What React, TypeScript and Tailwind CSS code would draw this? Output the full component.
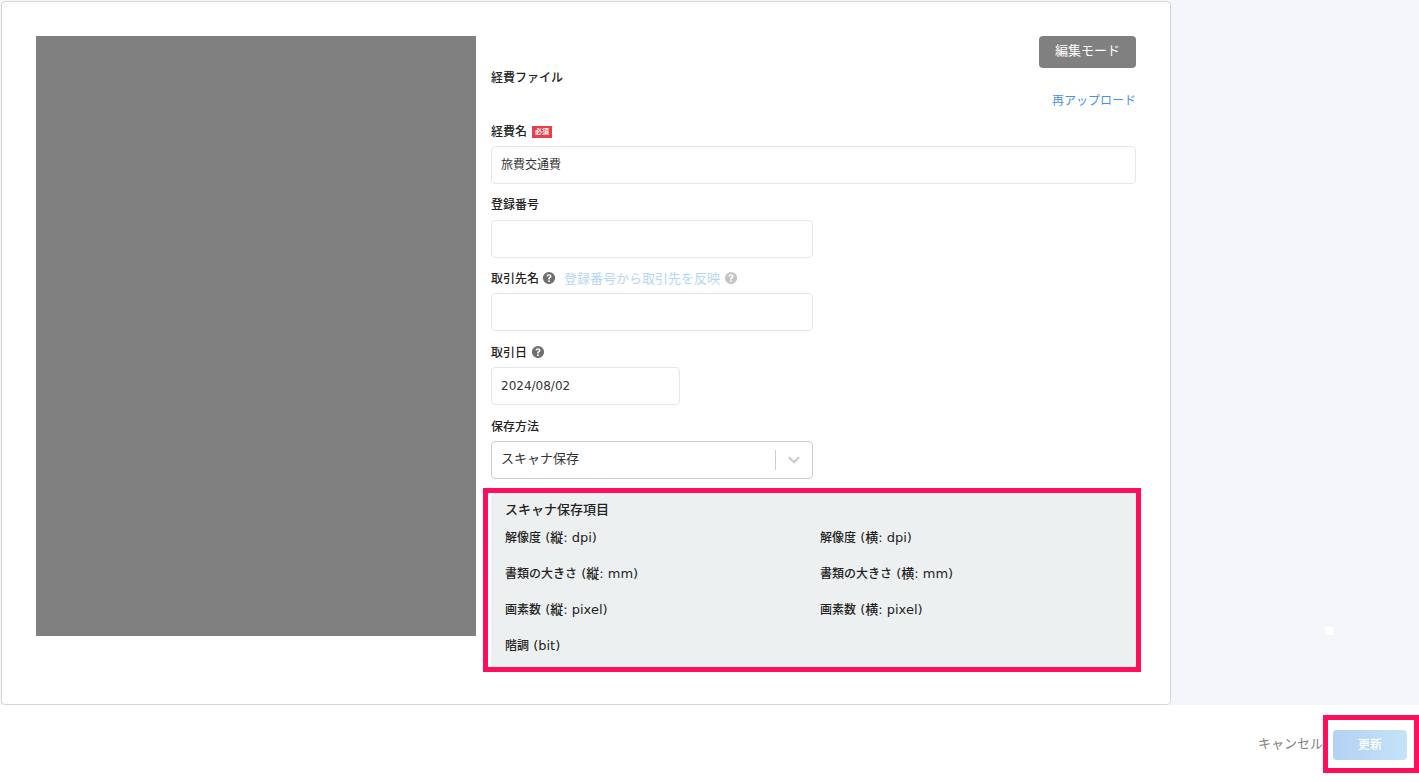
import { ChevronDown } from 'lucide-react';

function Help({ className }: { className: string }) {
  return (
    <svg viewBox="0 0 16 16" className={className} fill="currentColor">
      <path
        fillRule="evenodd"
        d="M8 1a7 7 0 1 1 0 14A7 7 0 0 1 8 1Zm-.9 9.6v1.9h1.8v-1.9H7.1ZM8 3.6c-1.6 0-2.7.9-2.9 2.4l1.7.3c.1-.8.5-1.2 1.2-1.2.6 0 1 .4 1 .9 0 .4-.2.7-.8 1.2-.8.6-1.1 1.2-1.1 2v.4h1.7v-.3c0-.4.2-.7.8-1.1.9-.7 1.2-1.3 1.2-2.2 0-1.4-1.1-2.4-2.8-2.4Z"
      />
    </svg>
  );
}

function Input({ className, value }: { className: string; value?: string }) {
  return (
    <div className={`h-[38px] rounded border border-[#e2e6ef] bg-white px-[9px] text-xs leading-[36px] text-[#333] ${className}`}>
      {value}
    </div>
  );
}

const scanItems = [
  ['解像度', ' (縦: dpi)'],
  ['解像度', ' (横: dpi)'],
  ['書類の大きさ', ' (縦: mm)'],
  ['書類の大きさ', ' (横: mm)'],
  ['画素数', ' (縦: pixel)'],
  ['画素数', ' (横: pixel)'],
  ['階調', ' (bit)'],
];

export default function App() {
  return (
    <div className="h-[782px] overflow-hidden bg-white font-['DejaVu_Sans','Noto_Sans_CJK_JP',sans-serif]">
      <div className="relative h-[705px] bg-[#f5f6fa] pt-px pl-px">
        <div className="flex h-[704px] w-[1170px] rounded border border-[#d5d7dc] bg-white pt-[34px] pl-[34px]">
          <div className="h-[600px] w-[440px] bg-[#808080]" />

          <div className="ml-[15px] w-[645px]">
            <div className="flex justify-end">
              <button className="h-8 w-[97px] rounded bg-[#808080] pb-[3px] text-[13px] text-white">編集モード</button>
            </div>
            <div className="h-[18px] text-xs leading-5 font-medium text-[#222]">経費ファイル</div>
            <div className="mt-[3px] h-6 text-right text-xs leading-6 text-[#4a90e2]">再アップロード</div>

            <div className="mt-[9px] flex h-[18px] items-center gap-[5px] pt-0.5 text-xs font-medium text-[#222]">
              経費名
              <span className="flex h-3 w-5 items-center justify-center bg-[#e8404a] text-[7px] leading-none font-bold text-white">必須</span>
            </div>
            <Input className="mt-1.5 w-full" value="旅費交通費" />

            <div className="mt-[11px] h-[18px] text-xs leading-5 font-medium text-[#222]">登録番号</div>
            <Input className="mt-[7px] w-[322px]" />

            <div className="mt-[11px] flex h-[18px] items-center pt-0.5 text-xs font-medium text-[#222]">
              取引先名
              <Help className="-mt-[3px] ml-[3px] h-[14px] w-[14px] text-[#6f6f6f]" />
              <span className="ml-2 text-[13px] font-normal text-[#b5d6f2]">登録番号から取引先を反映</span>
              <Help className="-mt-[3px] ml-1 h-[14px] w-[14px] text-[#c4c4c4]" />
            </div>
            <Input className="mt-1.5 w-[322px]" />

            <div className="mt-3 flex h-[18px] items-center pt-0.5 text-xs font-medium text-[#222]">
              取引日
              <Help className="-mt-[3px] ml-1 h-[14px] w-[14px] text-[#6f6f6f]" />
            </div>
            <Input className="mt-1.5 w-[189px]" value="2024/08/02" />

            <div className="mt-3 h-[18px] text-xs leading-5 font-medium text-[#222]">保存方法</div>
            <div className="mt-1.5 flex h-[38px] w-[322px] items-center rounded border border-[#cccccc] bg-white pl-[9px] text-[#333]">
              <span className="flex-1 pb-0.5 text-[13px]">スキャナ保存</span>
              <span className="h-5 w-px bg-[#cccccc]" />
              <span className="flex w-9 justify-center">
                <ChevronDown className="h-[18px] w-[18px] text-[#cccccc]" strokeWidth={3} />
              </span>
            </div>

            <div className="relative mt-3.5 h-[174px] bg-[#edf0f1] px-3.5 pt-[7px]">
              <div className="h-[18px] text-[13px] leading-5 font-medium text-[#222]">スキャナ保存項目</div>
              <div className="mt-px grid grid-cols-[315px_1fr]">
                {scanItems.map(([name, unit]) => (
                  <div key={name + unit} className="h-9 pt-px text-xs leading-9 font-medium text-[#222]">
                    {name}
                    <span className="text-[13px]">{unit}</span>
                  </div>
                ))}
              </div>
              <div className="absolute -top-[5px] -right-[5px] -bottom-[5px] -left-2 border-[5px] border-[#ff0f5b]" />
            </div>
          </div>
        </div>
        <div className="absolute top-[627px] left-[1325px] h-2 w-2 bg-white" />
      </div>

      <div className="relative flex h-[77px] items-start justify-end pt-[25px] pr-3">
        <span className="mr-[10px] h-[30px] text-[13px] leading-7 text-[#808080]">キャンセル</span>
        <button className="h-[30px] w-[74px] rounded bg-gradient-to-r from-[#b3d1f3] to-[#c4e3f8] text-xs font-medium text-white">更新</button>
        <div className="absolute top-2.5 right-0 h-[58px] w-24 border-[5px] border-[#ff0f5b]" />
      </div>
    </div>
  );
}
